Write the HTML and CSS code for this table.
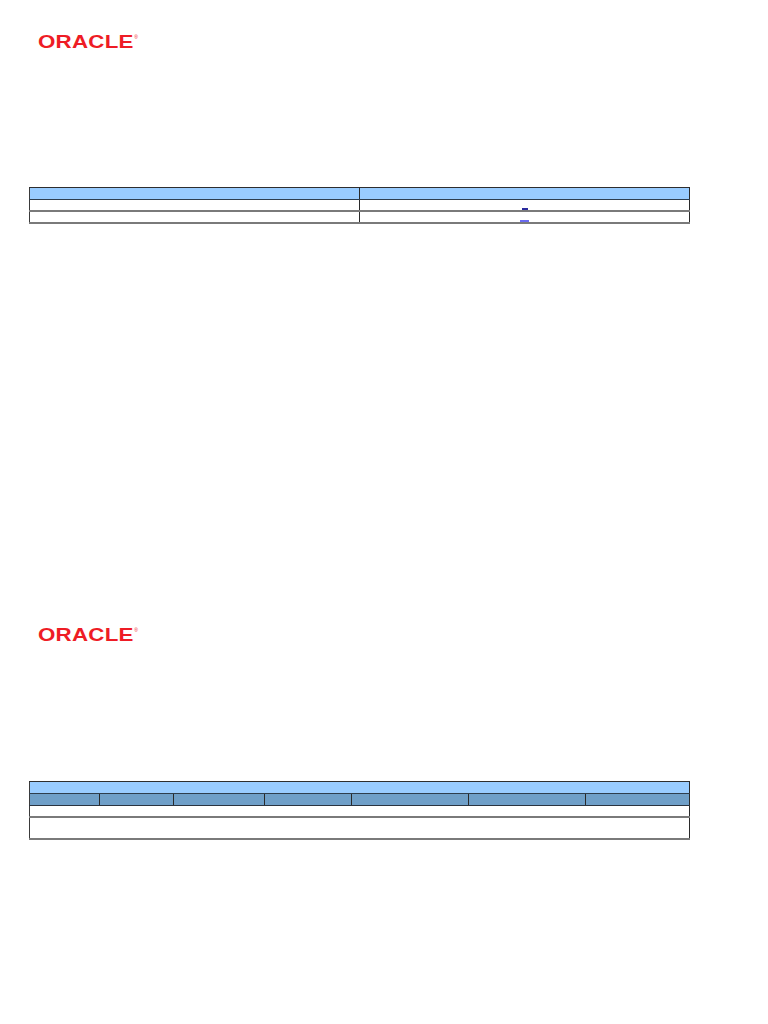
FILE: index.html
```html
<!DOCTYPE html>
<html>
<head>
<meta charset="utf-8">
<title>Report</title>
<link rel="stylesheet" href="styles.css">
</head>
<body>
<div class="page">
  <section class="sheet first">
    <div class="logo"><span class="logo-text">ORACLE</span><span class="reg">&reg;</span></div>
    <table class="grid two">
      <colgroup><col class="c-half"><col></colgroup>
      <thead>
        <tr class="h1"><th></th><th></th></tr>
      </thead>
      <tbody>
        <tr class="r"><td></td><td class="center"><a class="lnk dark" href="#"></a></td></tr>
        <tr class="r"><td></td><td class="center"><a class="lnk light" href="#"></a></td></tr>
      </tbody>
    </table>
  </section>

  <section class="sheet second">
    <div class="logo"><span class="logo-text">ORACLE</span><span class="reg">&reg;</span></div>
    <table class="grid seven">
      <colgroup>
        <col class="w70"><col class="w74"><col class="w91"><col class="w87"><col class="w117"><col class="w117"><col>
      </colgroup>
      <thead>
        <tr class="h1"><th colspan="7"></th></tr>
        <tr class="h2"><th></th><th></th><th></th><th></th><th></th><th></th><th></th></tr>
      </thead>
      <tbody>
        <tr class="r"><td colspan="7"></td></tr>
        <tr class="r tall"><td colspan="7"></td></tr>
      </tbody>
    </table>
  </section>
</div>
</body>
</html>
```

FILE: styles.css
```css
html, body {
  margin: 0;
  padding: 0;
  background: #ffffff;
  font-family: "Liberation Sans", Arial, sans-serif;
  font-size: 10px;
}

.page {
  width: 768px;
}

.sheet {
  padding-left: 29px;
}

.sheet.first {
  padding-top: 33px;
  height: 560px;
}

.sheet.second {
  padding-top: 33px;
}

.logo {
  height: 18px;
  margin-left: 9px;
  display: flex;
  align-items: flex-start;
  color: #ee1c25;
}

.logo-text {
  display: inline-block;
  font-size: 18px;
  line-height: 18px;
  font-weight: bold;
  transform: scaleX(1.24);
  transform-origin: left top;
  letter-spacing: 0.2px;
}

.reg {
  font-size: 5px;
  line-height: 5px;
  margin-left: 19px;
  margin-top: 2px;
}

.grid {
  border-collapse: collapse;
  table-layout: fixed;
  width: 661px;
  margin-top: 136px;
  border-top: 1px solid #2e2e2e;
  border-left: 1px solid #3a3a3a;
  border-right: 1px solid #2e2e2e;
}

.grid.seven {
  margin-top: 137px;
}

.grid th, .grid td {
  padding: 0;
  border-right: 1px solid #2a2a2a;
}

.c-half { width: 330px; }
.w70 { width: 70px; }
.w74 { width: 74px; }
.w91 { width: 91px; }
.w87 { width: 87px; }
.w117 { width: 117px; }

.h1 th {
  height: 11px;
  background: #99ccff;
  border-bottom: 1px solid #2e3e4e;
}

.h2 th {
  height: 11px;
  background: #6f9fc8;
  border-bottom: 1px solid #2a3440;
}

.r td {
  height: 10px;
  background: #ffffff;
  border-bottom: 2px solid #7a7a7a;
  vertical-align: bottom;
}

.r.tall td {
  height: 20px;
}

.center {
  text-align: center;
  line-height: 0;
}

.lnk {
  display: inline-block;
  height: 0;
  vertical-align: bottom;
}

.lnk.dark {
  width: 6px;
  border-bottom: 2px solid #2b2b9e;
}

.lnk.light {
  width: 9px;
  border-bottom: 2px solid #6a6af0;
}
```
